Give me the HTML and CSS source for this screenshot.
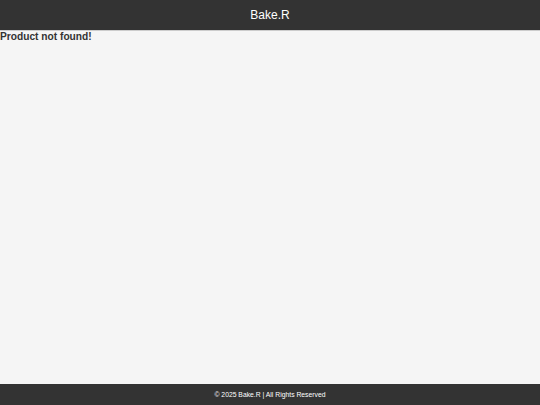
FILE: index.html
```html
<!DOCTYPE html>
<html>
<head>
<meta charset="utf-8">
<link rel="stylesheet" href="styles.css">
</head>
<body>
<div class="page">
  <header class="header"><span class="brand">Bake.R</span></header>
  <main class="main"><h2 class="msg">Product not found!</h2></main>
  <footer class="footer">© 2025 Bake.R | All Rights Reserved</footer>
</div>
</body>
</html>
```
FILE: styles.css
```css
html, body { margin: 0; padding: 0; }
body { background: #f5f5f5; font-family: "Liberation Sans", Arial, sans-serif; color: #333; }
.page { display: flex; flex-direction: column; min-height: 405px; }
.header { height: 31px; background: #333; border-bottom: 1px solid #ccc; display: flex; align-items: center; justify-content: center; box-sizing: border-box; }
.brand { color: #fff; font-size: 12px; }
.main { flex: 1; }
.msg { margin: 0; font-size: 10.2px; font-weight: bold; line-height: 11px; padding-top: 0; }
.footer { height: 21px; background: #333; color: #fff; font-size: 6.8px; display: flex; align-items: center; justify-content: center; }
```
